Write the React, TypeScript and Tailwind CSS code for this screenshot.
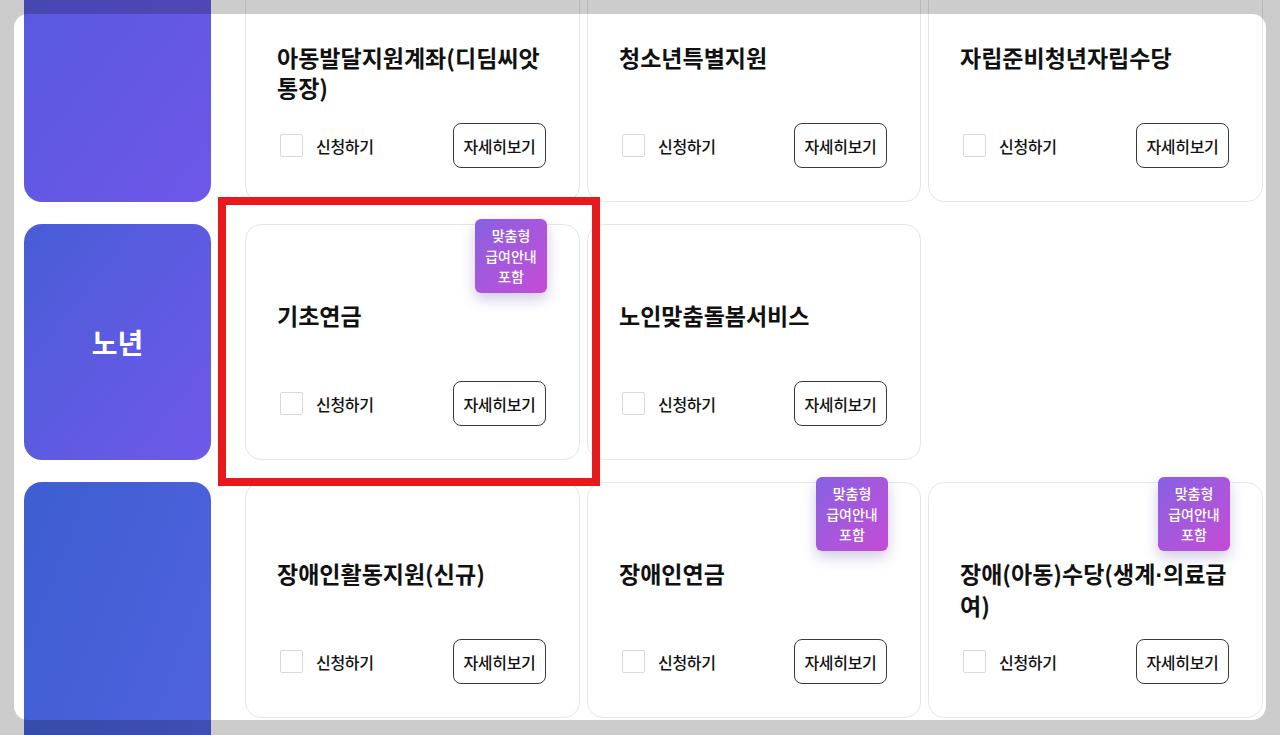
import React from "react"

type Benefit = {
  title: React.ReactNode
  badge?: boolean
}

type Row = {
  label?: string
  blockClass: string
  items: (Benefit | null)[]
}

const rows: Row[] = [
  {
    blockClass: "h-[236px] bg-gradient-to-br from-[#5659de] to-[#6e57e9]",
    items: [
      { title: "아동발달지원계좌(디딤씨앗통장)" },
      { title: "청소년특별지원" },
      { title: "자립준비청년자립수당" },
    ],
  },
  {
    label: "노년",
    blockClass: "h-[236px] bg-gradient-to-br from-[#475dd7] to-[#6f58ea]",
    items: [{ title: "기초연금", badge: true }, { title: "노인맞춤돌봄서비스" }, null],
  },
  {
    // this category runs on below the visible area
    blockClass: "h-[494px] bg-gradient-to-br from-[#3d5ed0] to-[#5563e4]",
    items: [
      { title: "장애인활동지원(신규)" },
      { title: "장애인연금", badge: true },
      {
        title: (
          <>
            장애(아동)수당(생계<span className="font-['Liberation_Sans',sans-serif]">·</span>의료급여)
          </>
        ),
        badge: true,
      },
    ],
  },
]

function Badge() {
  return (
    <div className="absolute top-[-6px] right-[32px] flex h-[74px] w-[72px] items-center justify-center rounded-[6px] bg-gradient-to-br from-[#8760e2] to-[#c44ad6] text-center text-[14px] font-medium leading-[20.5px] text-white shadow-[0_6px_14px_rgba(90,60,160,0.28)]">
      맞춤형
      <br />
      급여안내
      <br />
      포함
    </div>
  )
}

function BenefitCard({ item }: { item: Benefit }) {
  return (
    <div className="relative flex h-[236px] flex-col rounded-[16px] border border-[#e5e6e8] bg-white pl-[31px] pr-[33px] pb-[33px] pt-[75px]">
      {item.badge && <Badge />}
      <h3 className="text-[23px] font-bold leading-[30px] text-[#111]">{item.title}</h3>
      <div className="mt-auto flex items-center justify-between">
        <label className="flex items-center">
          <span className="ml-[3px] h-[23px] w-[23px] rounded-[2px] border border-[#d6d9df] bg-white" />
          <span className="ml-[13px] text-[16px] font-medium tracking-[-0.3px] text-[#111]">신청하기</span>
        </label>
        <button className="flex h-[45px] w-[93px] items-center justify-center rounded-[8px] border border-[#3a3a3a] bg-white text-[16px] font-medium tracking-[-0.3px] text-[#111]">
          자세히보기
        </button>
      </div>
    </div>
  )
}

export default function App() {
  return (
    <div className="relative h-[735px] w-[1280px] overflow-hidden bg-white font-['Noto_Sans_CJK_KR','Noto_Sans',sans-serif]">
      {/* benefit rows */}
      <div className="mt-[-34px] flex flex-col gap-[22px] pl-[24px]">
        {rows.map((row, i) => (
          <div key={i} className="flex items-start">
            <div className={`flex w-[187px] shrink-0 items-center justify-center rounded-[18px] ${row.blockClass}`}>
              {row.label && <span className="text-[28px] font-bold text-white">{row.label}</span>}
            </div>
            <div className="ml-[34px] grid grid-cols-[335px_334px_335px] gap-[7px]">
              {row.items.map((item, j) => (item ? <BenefitCard key={j} item={item} /> : <div key={j} />))}
            </div>
          </div>
        ))}
      </div>

      {/* highlight annotation */}
      <div className="pointer-events-none absolute left-[218px] top-[197px] h-[289px] w-[382px] border-[8px] border-[#e6191c]" />

      {/* dimmed frame around the white panel */}
      <div className="pointer-events-none absolute top-[14px] left-[14px] right-[14px] bottom-[15px] rounded-[14px] shadow-[0_0_0_2000px_rgba(0,0,0,0.2)]" />
    </div>
  )
}
